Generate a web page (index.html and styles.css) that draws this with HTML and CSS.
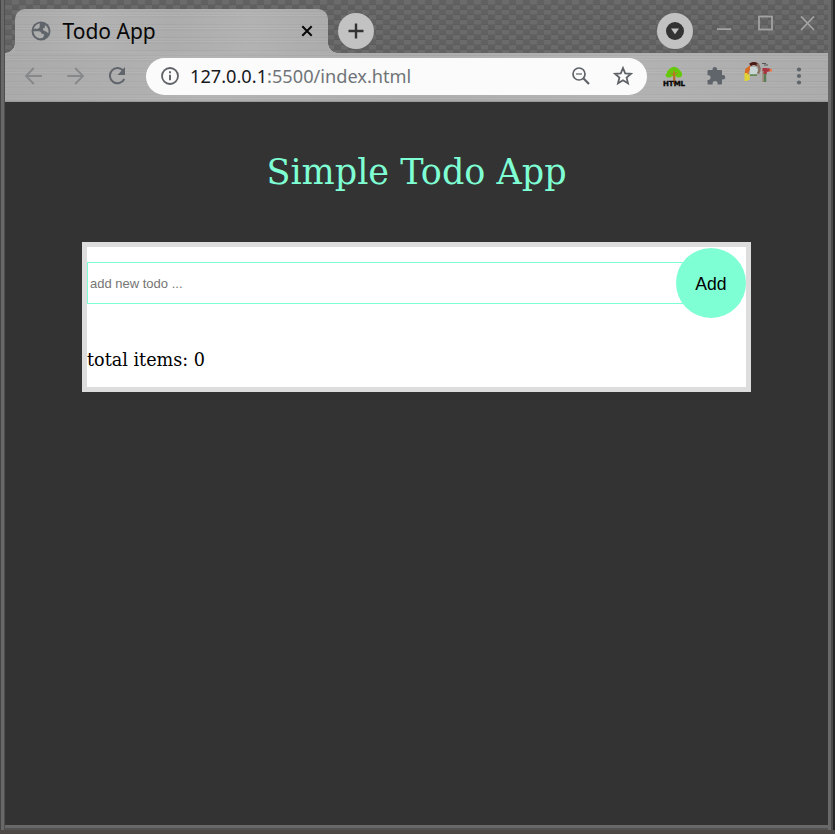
FILE: index.html
```
<!DOCTYPE html>
<html lang="en">
<head>
<meta charset="utf-8">
<title>Todo App</title>
<link rel="stylesheet" href="styles.css">
</head>
<body>
<div class="window">
  <header class="titlebar">
    <div class="tab metal">
      <svg class="globe" viewBox="0 0 20 20"><circle cx="10" cy="10" r="9.5" fill="#60656b"/><path d="M8.8 2.3C6 2.8 3.4 5 2.6 8.2L4.2 7.4 6.2 7.9 8.6 6.6 8.7 4.4ZM2.5 10.3H8.4Q10.3 10.5 10.4 12.5L13.3 13.4 12.2 16.6C8.3 18.8 3 16 2.5 10.3ZM13.8 4C16.7 5.5 18.3 9.2 17.3 12.3L15.4 10.8 12.2 9.3 12.1 7.2 14 6.5Z" fill="#adadad"/></svg>
      <span class="tab-title">Todo App</span>
      <svg class="tab-close" viewBox="0 0 12 12"><path d="M1.3 1.3 10.7 10.7M10.7 1.3 1.3 10.7" stroke="#080808" stroke-width="2"/></svg>
    </div>
    <div class="round"><svg width="16" height="16" viewBox="0 0 16 16"><path d="M8 .5V15.5M.5 8H15.5" stroke="#333" stroke-width="2.4"/></svg></div>
    <div class="round search"><svg width="18" height="18" viewBox="0 0 18 18"><circle cx="9" cy="9" r="9" fill="#333"/><path d="M5 6.5H13L9 12.3Z" fill="#c4c4c4"/></svg></div>
    <svg class="controls" viewBox="0 0 100 18"><g fill="none" stroke="#a2a2a2" stroke-width="1.8"><path d="M1 14.2H15.3M85 1.3 98 15M98 1.3 85 15"/><rect x="43" y="1.5" width="13" height="13"/></g></svg>
  </header>
  <nav class="toolbar metal">
    <svg class="nav-icons" viewBox="0 0 106 20"><g fill="none" stroke-width="1.8"><path stroke="#86888a" d="M19 10H3.2M10.8 2 3 10 10.8 18M44.3 10H60M52.2 2 60 10 52.2 18"/><path stroke="#60656b" stroke-width="2" d="M100.5 5A7.6 7.6 0 1 0 101.3 13"/></g><path d="M102 1V9H94.5Z" fill="#60656b"/></svg>
    <div class="address">
      <svg class="info" viewBox="0 0 18 18"><circle cx="9" cy="9" r="8" fill="none" stroke="#5f6368" stroke-width="1.8"/><path d="M9 4.3V6.2M9 7.8V13.3" stroke="#5f6368" stroke-width="1.9"/></svg>
      <span class="url">127.0.0.1<span class="path">:5500/index.html</span></span>
      <svg class="zoom" viewBox="0 0 18 18"><g fill="none" stroke="#5f6368"><circle cx="7" cy="7" r="6" stroke-width="1.7"/><path d="M4 7H10" stroke-width="1.2"/><path d="M11.3 11.3 17 17" stroke-width="2.2"/></g></svg>
      <svg class="star" viewBox="0 0 20 20"><path d="M10 2 12.2 7.4 18 7.8 13.6 11.6 15 17.3 10 14.2 5 17.3 6.4 11.6 2 7.8 7.8 7.4Z" fill="none" stroke="#5f6368" stroke-width="1.8"/></svg>
    </div>
    <div class="tree">
      <svg viewBox="0 0 18 18"><path d="M2 7C2 4 4 4 5 2.5Q9-1 13 2.5C14 4 17 5 17.2 8.5 17 12 13 12.3 11 10.3H7.5C4 13 .5 11 .5 9Z" fill="#65c90b"/><path d="M8 6H10.2L10.6 18H8Z" fill="#b5702a"/><path d="M5 6.5 9 10 13 6M9 4V10" fill="none" stroke="#b68123" stroke-width="1"/></svg>
      <b>HTML</b>
    </div>
    <svg class="puzzle" viewBox="0 0 20 20"><path d="M2.5 4H6.5V3.2A2.3 2.3 0 0 1 11.1 3.2V4H15Q16 4 16 5V9H17A2.3 2.3 0 0 1 17 13.6H16V17.5Q16 18.5 15 18.5H11.6V17.5A2.5 2.5 0 0 0 6.6 17.5V18.5H2.5Q1.5 18.5 1.5 17.5V14H2.3A2.4 2.4 0 0 0 2.3 9.2H1.5V5Q1.5 4 2.5 4Z" fill="#60656b"/></svg>
    <svg class="pr" viewBox="0 0 28 22"><g fill="none"><path stroke="#d96c24" stroke-width="4" d="M2.5 12.5 3.2 8 7 5"/><path stroke="#4b1b15" stroke-width="3" d="M6 3Q10 0 13.5 3"/><path stroke="#8a7162" stroke-width="2.5" d="M13 2Q17.5 6 14 11.5"/><path stroke="#e0d336" stroke-width="3" d="M2 11V19M4.2 12.5V18"/><path stroke="#5c8750" stroke-width="1.5" d="M6 13.2H13"/><path stroke="#a08a78" stroke-width="1.5" d="M19 20V7"/><path stroke="#5a7b54" stroke-width="2.5" d="M21 20V9"/><path stroke="#a83440" stroke-width="3.2" d="M18.5 7.5H21.5L21 12M21 10Q22.5 7.5 26 8"/></g><path d="M6 5H12L14 8 12.5 12H6Z" fill="#c9d6d5"/><path d="M18 1.5H22M20 3H24" stroke="#555"/><path d="M25.5 7H28V9.5H25.5Z" fill="#ed7747"/></svg>
    <svg class="menu" viewBox="0 0 6 18"><g fill="#60656b"><circle cx="3" cy="2.5" r="2.1"/><circle cx="3" cy="9" r="2.1"/><circle cx="3" cy="15.5" r="2.1"/></g></svg>
  </nav>
  <main class="page">
    <h1>Simple Todo App</h1>
    <section class="card">
      <form class="entry">
        <input type="text" placeholder="add new todo ...">
        <button type="button">Add</button>
      </form>
      <p class="total">total items: 0</p>
    </section>
  </main>
</div>
</body>
</html>
```
FILE: styles.css
```
* { box-sizing: border-box; }
body { margin: 0; height: 834px; overflow: hidden; background: #4c4946; }
svg { display: block; flex: none; }
.window {
  width: 835px; height: 830px; display: flex; flex-direction: column;
  padding: 0 7px 5px 5px;
  background:
    linear-gradient(90deg, #444 1px, #686868 1px 4px, #4f4f4f 4px) 0 0 / 5px 100% no-repeat,
    linear-gradient(90deg, #696969 3px, #4a4a4a 3px 5px, #252525 5px) 100% 0 / 7px 100% no-repeat,
    linear-gradient(#686868 3px, #525252 3px) 0 100% / 100% 5px no-repeat;
}
.titlebar {
  height: 53px; flex: none; display: flex; padding: 9px 12px 0 10px;
  background-color: #606060;
  background-image:
    linear-gradient(#0000 75%, #48484833 75%),
    conic-gradient(#6b6b6b 25%, #5f5f5f 0 50%, #6b6b6b 0 75%, #616161 0);
  background-size: 14px 5px, 14px 10px;
}
.metal {
  background-color: #acacac;
  background-image:
    linear-gradient(90deg, #a6a6a699 0%, #b4b4b499 25%, #a8a8a877 50%, #b4b4b499 75%, #a8a8a888 100%),
    repeating-linear-gradient(180deg, #b0b0b0 0 2px, #a3a3a3 2px 3px, #b4b4b4 3px 5px, #a9a9a9 5px 6px, #bcbcbc 6px 7px, #a9a9a9 7px 9px, #b0b0b0 9px 13px);
}
.tab {
  position: relative; width: 313px; height: 44px; flex: none;
  display: flex; align-items: center; padding: 0 15px 0 16px;
  border-radius: 10px 10px 0 0;
}
.tab::before, .tab::after { content: ""; position: absolute; bottom: 0; width: 10px; height: 10px; }
.tab::before { left: -10px; background: radial-gradient(circle at 0 0, #0000 9.5px, #acacac 10px); }
.tab::after { right: -10px; background: radial-gradient(circle at 100% 0, #0000 9.5px, #acacac 10px); }
.globe { width: 20px; height: 20px; }
.tab-title { margin-left: 11.5px; font: 21px "Noto Sans", sans-serif; color: #080808; }
.tab-close { width: 12px; height: 12px; margin-left: auto; }
.round { width: 36px; height: 36px; margin: 4px 0 0 10px; flex: none; border-radius: 50%; background: #c2c2c2; display: grid; place-items: center; }
.search { margin-left: auto; }
.controls { width: 100px; height: 18px; margin: 6px 0 0 23px; }
.toolbar { height: 49px; flex: none; display: flex; align-items: center; padding: 0 26px 2px 19px; border-bottom: 1px solid #999; }
.nav-icons { width: 106px; height: 20px; margin: 0 0 0 -1px; }
.address { width: 501px; height: 37px; margin: 1px 0 0 17px; padding: 0 14px 0 15px; border-radius: 19px; background: #fbfbfb; display: flex; align-items: center; flex: none; }
.info { width: 18px; height: 18px; margin-top: -1px; }
.url { margin: -2px auto 0 11px; font: 18.2px "Noto Sans", sans-serif; color: #17191d; white-space: nowrap; }
.path { color: #707478; }
.zoom { width: 18px; height: 18px; margin-top: -1px; }
.star { width: 20px; height: 20px; margin: -1px 0 0 23px; }
.tree { width: 22px; margin: 2px 0 0 16px; flex: none; display: grid; justify-items: center; }
.tree svg { width: 18px; height: 18px; grid-area: 1 / 1; }
.tree b { grid-area: 1 / 1; margin-top: 14px; font: 900 7px/8px "DejaVu Sans", sans-serif; -webkit-text-stroke: .4px #080808; color: #080808; }
.puzzle { width: 20px; height: 20px; margin-left: 21px; }
.pr { width: 28px; height: 22px; margin: -6px 0 0 18px; }
.menu { width: 6px; height: 18px; margin: 0 0 0 auto; }
.page { flex: 1; background: #333; padding: 50px 77px 0; font-family: "DejaVu Serif", serif; }
h1 { margin: 0; color: aquamarine; font-size: 35px; line-height: 41px; font-weight: 400; text-align: center; }
.card { height: 150px; margin-top: 49px; border: 5px solid #ddd; background: #fff; }
.entry { display: flex; align-items: center; height: 72px; }
.entry input { width: 600px; height: 42px; margin: 0; padding: 1px 2px; border: 1px solid aquamarine; font: 13px "Liberation Sans", sans-serif; }
.entry input::placeholder { color: #757575; }
.entry button { width: 70px; height: 70px; margin-left: -11px; padding: 2px 0 0; border: 0; border-radius: 50%; background: aquamarine; color: #000; font: 17.6px "Liberation Sans", sans-serif; flex: none; }
.total { margin: 31px 0 0; font-size: 17.6px; line-height: 21px; }
```
